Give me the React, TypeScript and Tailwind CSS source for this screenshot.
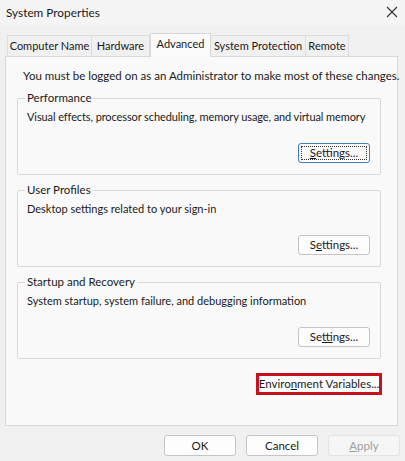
import React from "react";

const font = { fontFamily: "Lato, 'Noto Sans', sans-serif" };

function Btn({
  children,
  focused,
  disabled,
  className = "",
}: {
  children: React.ReactNode;
  focused?: boolean;
  disabled?: boolean;
  className?: string;
}) {
  return (
    <div
      className={
        "flex h-[20px] w-[72px] items-center justify-center whitespace-nowrap rounded-[3px] border text-[11.5px] leading-none " +
        (focused
          ? "border-[#3c80b5] bg-[#fbfbfb] text-[#1a1a1a] "
          : disabled
          ? "border-[#e3e3e3] bg-[#f5f5f5] text-[#a0a0a0] "
          : "border-[#c4c4c4] bg-[#fdfdfd] text-[#1a1a1a] ") +
        className
      }
    >
      {focused ? (
        <div className="flex h-[14px] w-[66px] items-center justify-center border border-dotted border-[#333]">
          {children}
        </div>
      ) : (
        children
      )}
    </div>
  );
}

function Group({
  title,
  desc,
  btn,
  descClass = "",
}: {
  title: string;
  desc: string;
  btn: React.ReactNode;
  descClass?: string;
}) {
  return (
    <fieldset className="ml-[11px] h-[84px] w-[364px] min-w-0 rounded-[2px] border border-[#d8d8d8] pl-[9px] pr-[10px]">
      <legend className="ml-[-2px] whitespace-nowrap px-[2px] text-[11.5px] leading-[14px] text-[#1a1a1a]">
        {title}
      </legend>
      <div className={"mt-[5px] whitespace-nowrap text-[11px] leading-[14px] text-[#1a1a1a] " + descClass}>{desc}</div>
      <div className="mt-[19px] flex justify-end">{btn}</div>
    </fieldset>
  );
}

export default function App() {
  const tabs = [
    { t: "Computer Name", w: "w-[85px]" },
    { t: "Hardware", w: "w-[59px]" },
    { t: "Advanced", w: "w-[61px]", sel: true },
    { t: "System Protection", w: "w-[96px]" },
    { t: "Remote", w: "w-[44px]" },
  ];
  return (
    <div className="flex h-[461px] w-[405px] flex-col overflow-hidden bg-[#f0f0f0]" style={font}>
      {/* Title bar */}
      <div className="flex h-[26px] items-center justify-between bg-[#f4f4f4] pl-[6px] pr-[7px]">
        <span className="whitespace-nowrap text-[11.8px] text-[#1a1a1a]">System Properties</span>
        <svg width="12" height="12" viewBox="0 0 12 12" className="mt-[-2px]">
          <path d="M1 1 L11 11 M11 1 L1 11" stroke="#333" strokeWidth="1.1" />
        </svg>
      </div>

      {/* Tabs */}
      <div className="mt-[7px] flex items-end pl-[7px]">
        {tabs.map((tab) => (
          <div
            key={tab.t}
            className={
              "flex items-center justify-center whitespace-nowrap border border-b-0 text-[11px] text-[#1a1a1a] " +
              tab.w +
              (tab.sel
                ? " relative z-10 mb-[-1px] h-[24px] border-[#d8d8d8] bg-[#fafafa] pb-[3px]"
                : " h-[21px] border-[#dcdcdc] bg-[#f0f0f0] -ml-px first:ml-0")
            }
          >
            {tab.t}
          </div>
        ))}
      </div>

      {/* Panel */}
      <div className="mx-[5px] mr-[7px] flex h-[370px] flex-col border border-[#d8d8d8] bg-[#f9f9f9]">
        <div className="mt-[12px] whitespace-nowrap pl-[17px] text-[11.5px] leading-[14px] text-[#1a1a1a]">
          You must be logged on as an Administrator to make most of these changes.
        </div>
        <div className="mt-[8px] flex flex-col gap-[8px]">
          <Group
            title="Performance"
            desc="Visual effects, processor scheduling, memory usage, and virtual memory"
            descClass="tracking-[-0.1px]"
            btn={
              <Btn focused>
                <span>
                  <u>S</u>ettings...
                </span>
              </Btn>
            }
          />
          <Group
            title="User Profiles"
            desc="Desktop settings related to your sign-in"
            btn={
              <Btn>
                <span>
                  S<u>e</u>ttings...
                </span>
              </Btn>
            }
          />
          <Group
            title="Startup and Recovery"
            desc="System startup, system failure, and debugging information"
            btn={
              <Btn>
                <span>
                  Se<u>t</u>tings...
                </span>
              </Btn>
            }
          />
        </div>
        <div className="mt-[14px] flex justify-end pr-[15px]">
          <div className="border-[3px] border-[#c8101e]">
            <div className="flex h-[16px] w-[120px] items-center justify-center whitespace-nowrap bg-[#fdfdfd] text-[11.5px] text-[#1a1a1a]">
              <span>
                Enviro<u>n</u>ment Variables...
              </span>
            </div>
          </div>
        </div>
      </div>

      {/* Bottom buttons */}
      <div className="mt-[9px] flex justify-end gap-[10px] pr-[5px]">
        <Btn className="h-[21px]">OK</Btn>
        <Btn className="h-[21px]">Cancel</Btn>
        <Btn disabled className="h-[21px]">
          <span>
            <u>A</u>pply
          </span>
        </Btn>
      </div>
    </div>
  );
}
